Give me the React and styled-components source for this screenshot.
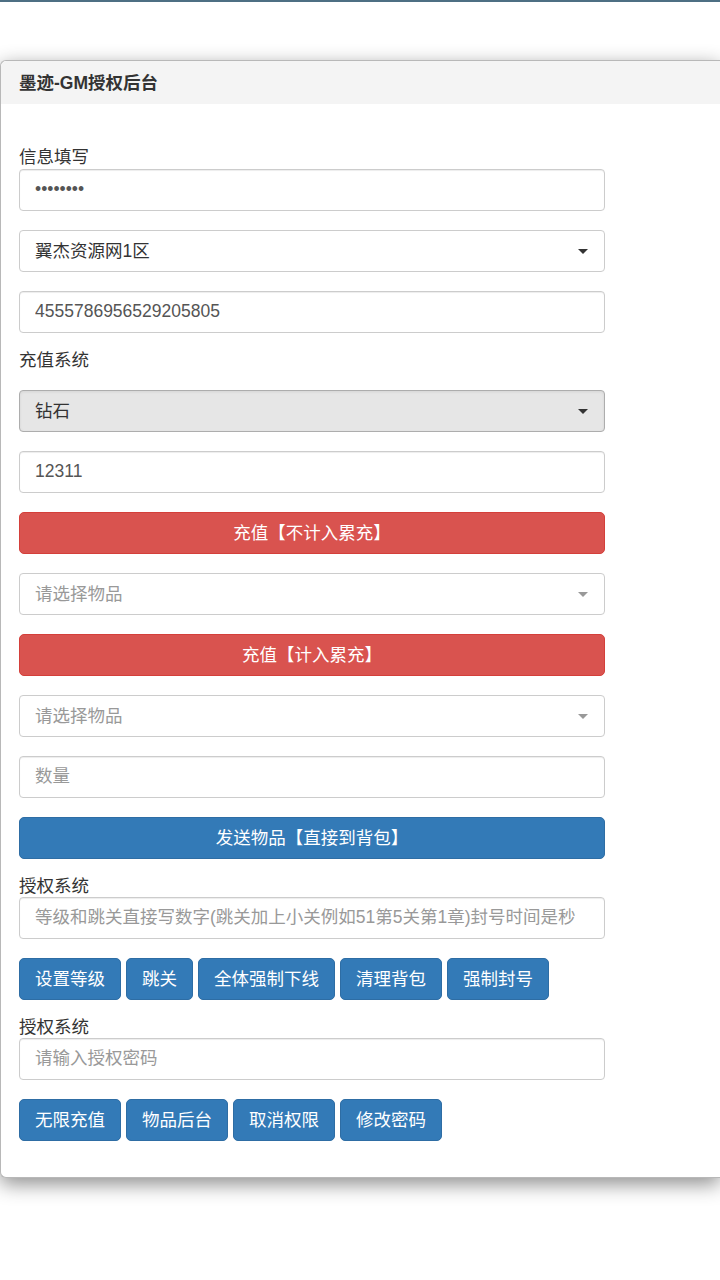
import React from 'react';
import styled, { createGlobalStyle } from 'styled-components';

const GlobalStyle = createGlobalStyle`
  html, body {
    margin: 0;
    padding: 0;
    background: #fff;
    overflow-x: hidden;
  }
  body {
    font-family: "Liberation Sans", "Noto Sans CJK SC", sans-serif;
    font-size: 17.5px;
    color: #333;
  }
  * {
    box-sizing: border-box;
  }
`;

const Page = styled.div`
  border-top: 2px solid #4d6f83;
  padding-top: 58px;
  padding-bottom: 100px;
`;

const Panel = styled.div`
  width: 100%;
  background: #fff;
  border: 1px solid #b8b8b8;
  border-right: none;
  border-radius: 6px 0 0 6px;
  box-shadow: 0 6px 20px rgba(0, 0, 0, 0.45);
`;

const PanelHeading = styled.div`
  height: 43px;
  display: flex;
  align-items: center;
  padding: 0 18px 2px;
  background: #f4f4f4;
  border-radius: 6px 0 0 0;
  font-weight: bold;
  font-size: 17.5px;
  color: #333;
`;

const PanelBody = styled.div`
  width: 604px;
  padding: 42px 0 36px 18px;
`;

const Label = styled.div`
  line-height: 22px;
  height: 22px;
  margin-top: ${(p) => (p.$first ? 0 : -3)}px;
  margin-bottom: ${(p) => p.$after || 0}px;
  color: #333;
`;

const TextInput = styled.input`
  display: block;
  width: 100%;
  height: 42px;
  margin: 0 0 19px;
  padding: 0 15px 1px;
  border: 1px solid #ccc;
  border-radius: 4px;
  box-shadow: inset 0 1px 1px rgba(0, 0, 0, 0.075);
  font-family: inherit;
  font-size: 17.5px;
  color: #555;
  background: #fff;
  outline: none;

  &::placeholder {
    color: #999;
  }
`;

const SelectBox = styled.div`
  height: 42px;
  margin-bottom: 19px;
  padding: 0 15px;
  display: flex;
  align-items: center;
  justify-content: space-between;
  border: 1px solid ${(p) => (p.$active ? '#adadad' : '#ccc')};
  border-radius: 4px;
  background: ${(p) => (p.$active ? '#e6e6e6' : '#fff')};
  color: ${(p) => (p.$placeholder ? '#999' : '#333')};
  box-shadow: ${(p) => (p.$active ? 'inset 0 1px 3px rgba(0,0,0,0.08)' : 'none')};
`;

const SelectText = styled.span`
  padding-bottom: 4px;
`;

const Caret = styled.span`
  width: 0;
  height: 0;
  margin-right: 1px;
  border-left: 5px solid transparent;
  border-right: 5px solid transparent;
  border-top: 5px solid ${(p) => (p.$muted ? '#999' : '#333')};
`;

const BlockButton = styled.button`
  display: block;
  width: 100%;
  height: 42px;
  margin: 0 0 19px;
  padding: 0 16px 3px;
  border-radius: 5px;
  border: 1px solid ${(p) => (p.$danger ? '#d43f3a' : '#2e6da4')};
  background: ${(p) => (p.$danger ? '#d9534f' : '#337ab7')};
  color: #fff;
  font-family: inherit;
  font-size: 17.5px;
  cursor: pointer;
`;

const ButtonRow = styled.div`
  display: flex;
  gap: 5px;
  margin-bottom: 19px;

  &:last-child {
    margin-bottom: 0;
  }
`;

const ActionButton = styled.button`
  height: 42px;
  padding: 0 15px 3px;
  border-radius: 5px;
  border: 1px solid #2e6da4;
  background: #337ab7;
  color: #fff;
  font-family: inherit;
  font-size: 17.5px;
  cursor: pointer;
`;

const Select = ({ children, placeholder, active }) => (
  <SelectBox $placeholder={placeholder} $active={active}>
    <SelectText>{children}</SelectText>
    <Caret $muted={placeholder} />
  </SelectBox>
);

export default function App() {
  return (
    <Page>
      <GlobalStyle />
      <Panel>
        <PanelHeading>墨迹-GM授权后台</PanelHeading>
        <PanelBody>
          <Label $first $after={1}>信息填写</Label>
          <TextInput type="password" defaultValue="12345678" />
          <Select>翼杰资源网1区</Select>
          <TextInput type="text" defaultValue="4555786956529205805" />

          <Label $after={19}>充值系统</Label>
          <Select active>钻石</Select>
          <TextInput type="text" defaultValue="12311" />
          <BlockButton $danger>充值【不计入累充】</BlockButton>
          <Select placeholder>请选择物品</Select>
          <BlockButton $danger>充值【计入累充】</BlockButton>
          <Select placeholder>请选择物品</Select>
          <TextInput type="text" placeholder="数量" />
          <BlockButton>发送物品【直接到背包】</BlockButton>

          <Label>授权系统</Label>
          <TextInput
            type="text"
            placeholder="等级和跳关直接写数字(跳关加上小关例如51第5关第1章)封号时间是秒"
          />
          <ButtonRow>
            <ActionButton>设置等级</ActionButton>
            <ActionButton>跳关</ActionButton>
            <ActionButton>全体强制下线</ActionButton>
            <ActionButton>清理背包</ActionButton>
            <ActionButton>强制封号</ActionButton>
          </ButtonRow>

          <Label>授权系统</Label>
          <TextInput type="text" placeholder="请输入授权密码" />
          <ButtonRow>
            <ActionButton>无限充值</ActionButton>
            <ActionButton>物品后台</ActionButton>
            <ActionButton>取消权限</ActionButton>
            <ActionButton>修改密码</ActionButton>
          </ButtonRow>
        </PanelBody>
      </Panel>
    </Page>
  );
}
